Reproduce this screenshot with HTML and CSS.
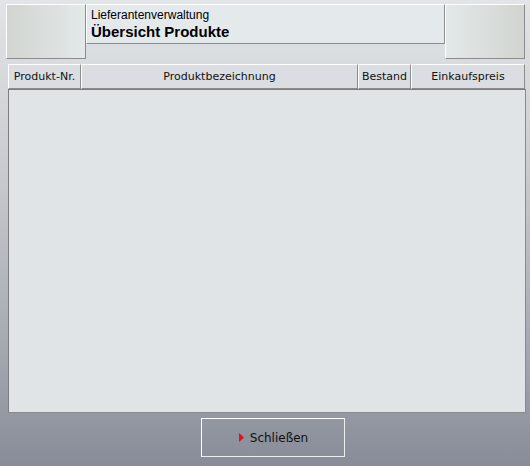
FILE: index.html
```html
<!DOCTYPE html>
<html lang="de">
<head>
    <meta charset="UTF-8">
    <meta name="viewport" content="width=device-width, initial-scale=1.0">
    <title>Übersicht Produkte</title>
    <link rel="stylesheet" href="styles.css">
</head>
<body>
    <div class="top">
        <div class="side side-left"></div>
        <div class="title-box">
            <div class="subtitle">Lieferantenverwaltung</div>
            <div class="title">Übersicht Produkte</div>
        </div>
        <div class="side side-right"></div>
    </div>

    <div class="table">
        <div class="thead">
            <div class="th col-nr">Produkt-Nr.</div>
            <div class="th col-name">Produktbezeichnung</div>
            <div class="th col-stock">Bestand</div>
            <div class="th col-price">Einkaufspreis</div>
        </div>
        <div class="tbody"></div>
    </div>

    <div class="footer">
        <button class="btn-close" type="button">
            <svg class="arrow" width="5" height="9" viewBox="0 0 5 9"><polygon points="0,0 5,4.5 0,9" fill="#e0101c"/></svg>
            Schließen
        </button>
    </div>
</body>
</html>
```

FILE: styles.css
```css
html, body { height: 100%; }
body { margin: 0; padding: 4px 5px 0 6px; box-sizing: border-box; background: linear-gradient(to bottom, #e1e5e7 0%, #c9cdd1 35%, #a9adb5 70%, #878c98 100%); font-family: "DejaVu Sans", Verdana, sans-serif; color: #111; overflow: hidden; }

.top { display: flex; align-items: flex-start; }
.side { width: 80px; height: 55px; box-sizing: border-box; border-top: 1px solid #fff; border-left: 1px solid #fff; border-right: 1px solid #8c8c8c; border-bottom: 1px solid #8c8c8c; }
.side-left { background: linear-gradient(to right, #d1d5d1, #e3e8e9); }
.side-right { background: linear-gradient(to right, #e3e8e9, #d1d5d1); }
.title-box { width: 359px; height: 40px; box-sizing: border-box; padding: 3px 0 0 4px; background: #e4eaec; border-top: 1px solid #fff; border-left: 1px solid #fff; border-right: 1px solid #8c8c8c; border-bottom: 1px solid #8c8c8c; font-family: "Liberation Sans", Arial, sans-serif; color: #000; }
.subtitle { font-size: 12px; line-height: 15px; }
.title { font-size: 15px; font-weight: bold; line-height: 17px; }

.table { margin: 5px 0 0 2px; width: 518px; }
.thead { display: flex; height: 25px; }
.th { box-sizing: border-box; height: 25px; line-height: 23px; font-size: 11px; text-align: center; background: #dadde1; border-top: 1px solid #fff; border-left: 1px solid #fff; border-right: 1px solid #8c8c8c; border-bottom: 1px solid #8c8c8c; white-space: nowrap; overflow: hidden; }
.col-nr { width: 73px; }
.col-name { width: 277px; }
.col-stock { width: 53px; }
.col-price { width: 114px; }
.tbody { height: 324px; box-sizing: border-box; background: #e0e4e6; border: 1px solid #7c7c7c; border-right-color: #8a8a8a; border-bottom-color: #8a8a8a; }

.footer { display: flex; justify-content: center; margin-top: 5px; padding-left: 14px; }
.btn-close { width: 144px; height: 39px; background: transparent; border: 1px solid #fff; border-right-color: #eceef0; border-bottom-color: #eceef0; font-family: "DejaVu Sans", Verdana, sans-serif; font-size: 12px; color: #111; display: flex; align-items: center; justify-content: center; gap: 6px; padding: 0 0 0 2px; cursor: pointer; }
.arrow { display: block; }
```
